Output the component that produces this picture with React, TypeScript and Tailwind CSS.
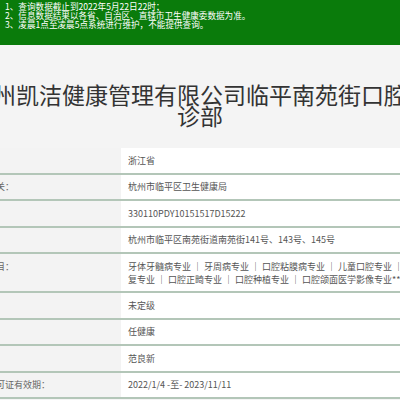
import React from 'react';

const notices = [
  '1、查询数据截止到2022年5月22日22时；',
  '2、信息数据结果以各省、自治区、直辖市卫生健康委数据为准。',
  '3、凌晨1点至凌晨5点系统进行维护，不能提供查询。',
];

interface Row {
  label: string;
  value: React.ReactNode;
  tall?: boolean;
}

const rows: Row[] = [
  { label: '省份：', value: '浙江省' },
  { label: '发证机关：', value: '杭州市临平区卫生健康局' },
  { label: '登记号：', value: '330110PDY10151517D15222' },
  { label: '地址：', value: '杭州市临平区南苑街道南苑街141号、143号、145号' },
  {
    label: '诊疗科目：',
    tall: true,
    value: (
      <>
        牙体牙髓病专业 ｜ 牙周病专业 ｜ 口腔粘膜病专业 ｜ 儿童口腔专业 ｜ 口腔修
        <br />
        复专业 ｜ 口腔正畸专业 ｜ 口腔种植专业 ｜ 口腔颌面医学影像专业***
      </>
    ),
  },
  { label: '等级：', value: '未定级' },
  { label: '法人：', value: '任健康' },
  { label: '负责人：', value: '范良新' },
  { label: '执业许可证有效期：', value: '2022/1/4 -至- 2023/11/11' },
];

const App: React.FC = () => {
  return (
    <div className="w-[400px] h-[400px] overflow-hidden bg-[#f4f4f4] font-['Noto_Sans_CJK_SC',sans-serif]">
      {/* 提示栏 */}
      <div className="h-[45px] bg-[#0a7b0b] pl-[5px] pt-[2px] text-[8.6px] leading-[9.2px] text-white whitespace-nowrap">
        {notices.map((n) => (
          <p key={n}>{n}</p>
        ))}
      </div>

      <h1 className="-ml-[36px] w-[472px] pt-[39px] pb-[22px] text-center text-[23px] leading-[21px] font-normal text-[#333]">
        杭州凯洁健康管理有限公司临平南苑街口腔门诊部
      </h1>

      <div className="text-[9px] leading-[13px] text-[#555]">
        {rows.map((r, i) => (
          <div key={i} className="flex border-b-2 border-[#b3c6b8]">
            <div
              className={`w-[121px] shrink-0 bg-[#f3f3f3] whitespace-nowrap text-[#666] ${
                r.tall ? 'py-[5.5px]' : 'py-[5.75px]'
              }`}
            >
              <span className="-ml-[31px]">{r.label}</span>
            </div>
            <div
              className={`flex-1 bg-white pl-[7px] whitespace-nowrap ${r.tall ? 'py-[5.5px]' : 'py-[5.75px]'}`}
            >
              {r.value}
            </div>
          </div>
        ))}
      </div>
    </div>
  );
};

export default App;
